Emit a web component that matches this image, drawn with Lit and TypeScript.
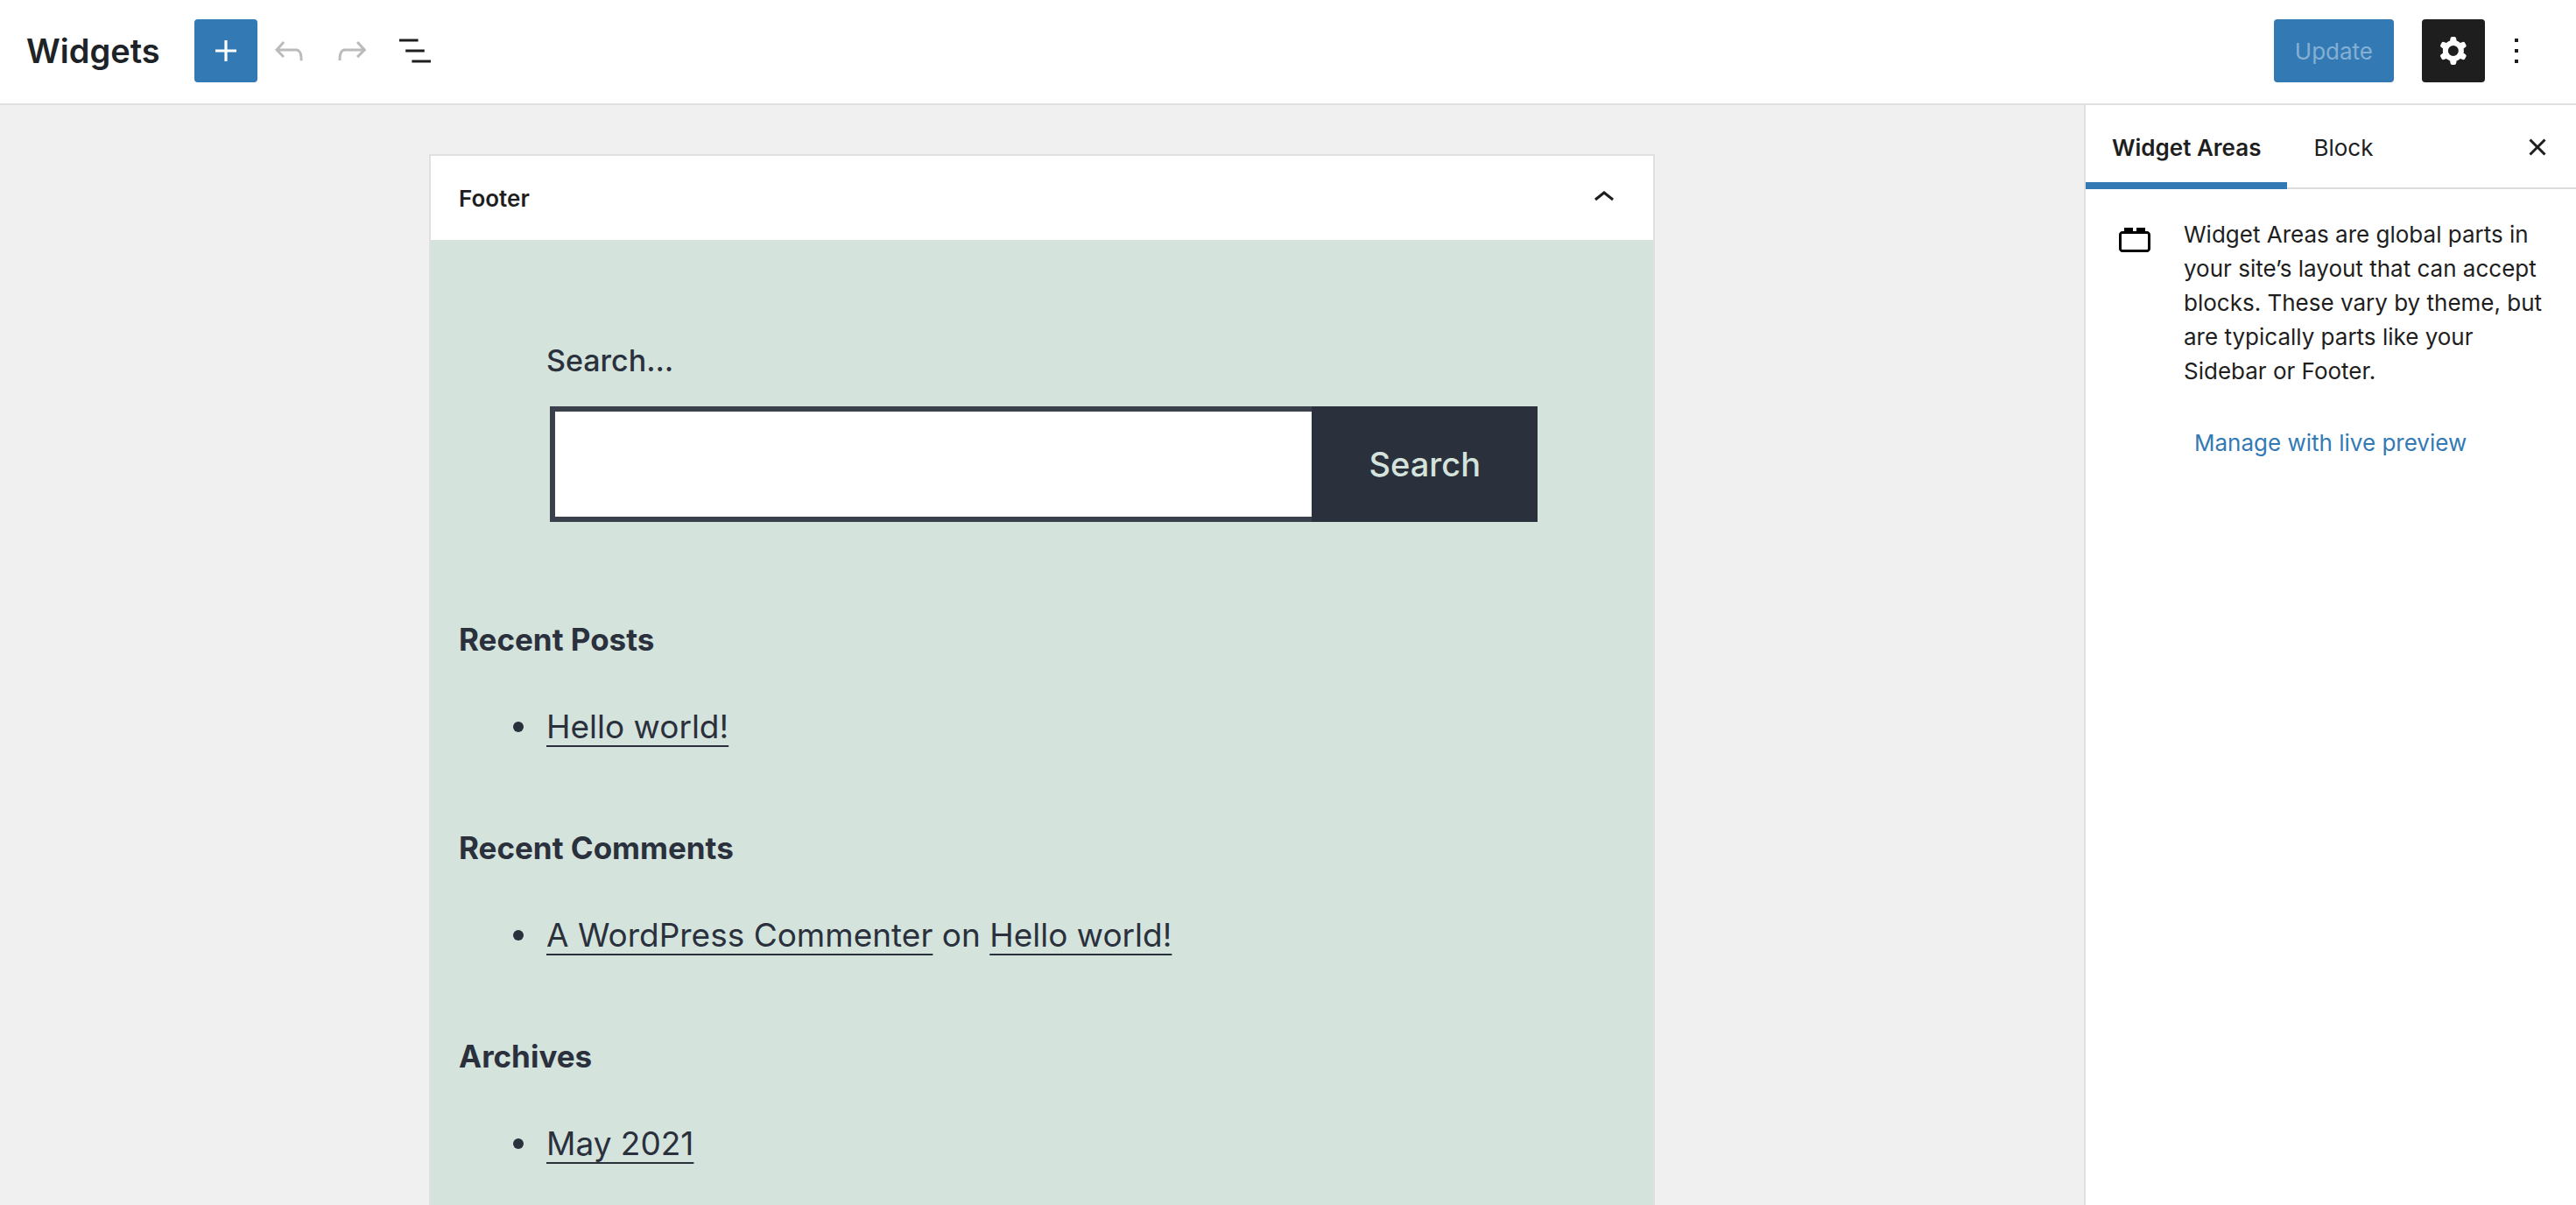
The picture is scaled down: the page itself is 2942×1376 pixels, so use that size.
import { LitElement, html, css, svg, nothing } from "lit";
import { customElement, property, state } from "lit/decorators.js";

const ICONS = {
  plus: "M18 11.2h-5.2V6h-1.6v5.2H6v1.6h5.2V18h1.6v-5.2H18z",
  undo: "M18.3 11.7c-.6-.6-1.4-.9-2.3-.9H6.7l2.9-3.3-1.1-1-4.5 5L8.5 16l1-1-2.7-2.7H16c.5 0 .9.2 1.3.5 1 1 1 3.4 1 4.5v.3h1.5v-.2c0-1.5 0-4.3-1.5-5.7z",
  redo: "M15.6 6.5l-1.1 1 2.9 3.3H8c-.9 0-1.7.3-2.3.9-1.4 1.5-1.4 4.2-1.4 5.6v.2h1.5v-.3c0-1.1 0-3.5 1-4.5.3-.3.7-.5 1.3-.5h9.2L14.5 15l1.1 1.1 4.6-4.6-4.6-5z",
  list: "M13.8 5.2H3v1.5h10.8V5.2zm-3.6 12v1.5H21v-1.5H10.2zm7.2-6H6.6v1.5h10.8v-1.5z",
  cog: "M10.289 4.836A1 1 0 0111.275 4h1.306a1 1 0 01.987.836l.244 1.466c.787.26 1.503.679 2.108 1.218l1.393-.522a1 1 0 011.216.437l.653 1.13a1 1 0 01-.23 1.273l-1.148.944a6.025 6.025 0 010 2.435l1.149.946a1 1 0 01.23 1.272l-.653 1.13a1 1 0 01-1.216.437l-1.394-.522c-.605.54-1.32.958-2.108 1.218l-.244 1.466a1 1 0 01-.987.836h-1.306a1 1 0 01-.986-.836l-.244-1.466a5.995 5.995 0 01-2.108-1.218l-1.394.522a1 1 0 01-1.217-.436l-.653-1.131a1 1 0 01.23-1.272l1.149-.946a6.026 6.026 0 010-2.435l-1.148-.944a1 1 0 01-.23-1.272l.653-1.131a1 1 0 011.217-.437l1.393.522a5.994 5.994 0 012.108-1.218l.244-1.466zM14.929 12a3 3 0 11-6 0 3 3 0 016 0z",
  more: "M13 19h-2v-2h2v2zm0-6h-2v-2h2v2zm0-6h-2V5h2v2z",
  chevron: "M6.5 12.4L12 8l5.5 4.4-.9 1.2L12 10l-4.5 3.6-1-1.2z",
  close: "M12 13.06l3.712 3.713 1.061-1.06L13.061 12l3.712-3.712-1.06-1.06L12 10.938 8.288 7.227l-1.061 1.06L10.939 12l-3.712 3.712 1.06 1.061L12 13.061z",
  block: "M19 8h-1V6h-5v2h-2V6H6v2H5c-1.1 0-2 .9-2 2v8c0 1.1.9 2 2 2h14c1.1 0 2-.9 2-2v-8c0-1.1-.9-2-2-2zm.5 10c0 .3-.2.5-.5.5H5c-.3 0-.5-.2-.5-.5v-8c0-.3.2-.5.5-.5h14c.3 0 .5.2.5.5v8z",
};

type IconName = keyof typeof ICONS;

const icon = (name: IconName) => html`
  <svg class="icon" viewBox="0 0 24 24" aria-hidden="true">
    ${svg`<path fill-rule="evenodd" clip-rule="evenodd" d=${ICONS[name]}></path>`}
  </svg>
`;

const shared = css`
  *,
  *::before {
    box-sizing: border-box;
  }
  h1,
  h2,
  h3,
  p,
  ul {
    margin: 0;
    padding: 0;
    font-size: inherit;
  }
  button,
  input {
    margin: 0;
    padding: 0;
    border: 0;
    border-radius: 0;
    background: none;
    color: inherit;
    font: inherit;
  }
  .icon {
    display: block;
    flex: none;
    width: 48px;
    height: 48px;
    fill: currentColor;
  }
`;

@customElement("editor-header")
class EditorHeader extends LitElement {
  static styles = [
    shared,
    css`
      :host {
        display: flex;
        align-items: center;
        justify-content: space-between;
        padding: 22px 32px 24px 30px;
        border-bottom: 2px solid #e0e0e0;
        background: #fff;
      }
      .group {
        display: flex;
        align-items: center;
      }
      .title {
        margin-right: 39px;
        color: #1d2327;
        font-size: 38px;
        font-weight: 600;
        line-height: 48px;
      }
      .tool {
        display: flex;
        align-items: center;
        justify-content: center;
        width: 72px;
        height: 72px;
        border-radius: 4px;
      }
      .tool:disabled {
        color: #bbb;
      }
      .add {
        background: #337ab5;
        color: #fff;
      }
      .update {
        height: 72px;
        margin-right: 32px;
        padding: 0 24px;
        border-radius: 4px;
        background: #337ab5;
        color: #85afd3;
      }
      .active {
        background: #1e1e1e;
        color: #fff;
      }
    `,
  ];

  render() {
    return html`
      <div class="group">
        <h1 class="title">Widgets</h1>
        <button class="tool add" aria-label="Add block">${icon("plus")}</button>
        <button class="tool" aria-label="Undo" disabled>${icon("undo")}</button>
        <button class="tool" aria-label="Redo" disabled>${icon("redo")}</button>
        <button class="tool" aria-label="List View">${icon("list")}</button>
      </div>
      <div class="group">
        <button class="update" disabled>Update</button>
        <button class="tool active" aria-label="Settings" aria-pressed="true">${icon("cog")}</button>
        <button class="tool" aria-label="Options">${icon("more")}</button>
      </div>
    `;
  }
}

interface Entry {
  before: string;
  joiner?: string;
  after?: string;
}

interface WidgetList {
  title: string;
  items: Entry[];
}

@customElement("widget-area")
class WidgetArea extends LitElement {
  @property() name = "";
  @property({ attribute: false }) lists: WidgetList[] = [];
  @state() private open = true;

  static styles = [
    shared,
    css`
      :host {
        display: flex;
        flex-direction: column;
        border: 2px solid #e0e0e0;
        border-bottom: 0;
        background: #fff;
      }
      .toggle {
        display: flex;
        align-items: center;
        justify-content: space-between;
        width: 100%;
        height: 96px;
        padding: 0 32px;
        font-weight: 600;
      }
      .closed .icon {
        transform: rotate(180deg);
      }
      .body {
        flex: 1;
        padding: 112px 32px 0;
        background: #d4e3dc;
        color: #2a303c;
        font-size: 37px;
        line-height: 68px;
      }
      .search {
        margin: 0 100px 112px;
      }
      .label {
        display: block;
        margin-bottom: 26px;
        font-size: 34px;
        font-weight: 500;
        line-height: 52px;
      }
      .field {
        display: flex;
        height: 132px;
        margin: 0 0 0 4px;
      }
      .input {
        flex: 1;
        min-width: 0;
        padding: 0 24px;
        border: 6px solid #3a404c;
        border-right: 0;
        background: #fff;
      }
      .submit {
        padding: 0 65px;
        background: #2a303c;
        color: #d4e3dc;
        font-size: 38px;
        font-weight: 500;
      }
      .list {
        margin-bottom: 82px;
      }
      .heading {
        margin-bottom: 44px;
        font-size: 35px;
        font-weight: 700;
        line-height: 44px;
      }
      .items {
        padding-left: 62px;
        list-style: none;
      }
      .item {
        display: flex;
        align-items: center;
        gap: 26px;
      }
      .item::before {
        content: "";
        width: 12px;
        height: 12px;
        border-radius: 50%;
        background: #2a303c;
      }
      .link {
        color: inherit;
        text-decoration: underline 2px;
        text-underline-offset: 8px;
        text-decoration-skip-ink: none;
      }
    `,
  ];

  private toggle() {
    this.open = !this.open;
  }

  render() {
    return html`
      <h2 class=${this.open ? "head" : "head closed"}>
        <button class="toggle" aria-expanded=${this.open} @click=${this.toggle}>
          ${this.name} ${icon("chevron")}
        </button>
      </h2>
      ${this.open ? this.renderBody() : nothing}
    `;
  }

  private renderBody() {
    return html`
      <div class="body">
        <form class="search" @submit=${(e: Event) => e.preventDefault()}>
          <label class="label" for="search">Search…</label>
          <div class="field">
            <input class="input" id="search" type="text" />
            <button class="submit" type="submit">Search</button>
          </div>
        </form>
        ${this.lists.map(
          (list) => html`
            <section class="list">
              <h3 class="heading">${list.title}</h3>
              <ul class="items">
                ${list.items.map(
                  (item) => html`<li class="item"><span
                    ><a class="link" href="#">${item.before}</a>${item.after
                      ? html` ${item.joiner} <a class="link" href="#">${item.after}</a>`
                      : nothing}</span
                  ></li>`
                )}
              </ul>
            </section>
          `
        )}
      </div>
    `;
  }
}

@customElement("editor-sidebar")
class EditorSidebar extends LitElement {
  static styles = [
    shared,
    css`
      :host {
        display: block;
        border-left: 2px solid #e0e0e0;
        background: #fff;
      }
      .tabs {
        display: flex;
        align-items: center;
        height: 96px;
        box-shadow: inset 0 -2px #ddd;
      }
      .tab {
        height: 96px;
        padding: 0 30px;
      }
      .selected {
        box-shadow: inset 0 -8px #337ab5;
        font-weight: 600;
      }
      .close {
        margin: 0 20px 0 auto;
      }
      .panel {
        display: flex;
        gap: 32px;
        padding: 32px;
        line-height: 39px;
      }
      .glyph {
        color: #000;
      }
      .manage {
        display: flex;
        align-items: center;
        width: max-content;
        height: 72px;
        margin-top: 26px;
        padding: 0 12px;
        color: #337ab5;
        text-decoration: none;
      }
    `,
  ];

  render() {
    return html`
      <div class="tabs" role="tablist">
        <button class="tab selected" role="tab" aria-selected="true">Widget Areas</button>
        <button class="tab" role="tab" aria-selected="false">Block</button>
        <button class="close" aria-label="Close settings">${icon("close")}</button>
      </div>
      <div class="panel">
        <span class="glyph">${icon("block")}</span>
        <div class="text">
          <p>
            Widget Areas are global parts in your site’s layout that can accept blocks. These vary by
            theme, but are typically parts like your Sidebar or Footer.
          </p>
          <a class="manage" href="#">Manage with live preview</a>
        </div>
      </div>
    `;
  }
}

@customElement("app-root")
class AppRoot extends LitElement {
  private lists: WidgetList[] = [
    { title: "Recent Posts", items: [{ before: "Hello world!" }] },
    {
      title: "Recent Comments",
      items: [{ before: "A WordPress Commenter", joiner: "on", after: "Hello world!" }],
    },
    { title: "Archives", items: [{ before: "May 2021" }] },
  ];

  static styles = [
    shared,
    css`
      :host {
        display: flex;
        flex-direction: column;
        min-height: 100vh;
        background: #f0f0f0;
        color: #1e1e1e;
        font-family: Inter, "Liberation Sans", sans-serif;
        font-size: 26px;
        line-height: 39px;
      }
      .workspace {
        display: grid;
        flex: 1;
        grid-template-columns: minmax(0, 1fr) 562px;
      }
      .canvas {
        display: flex;
        justify-content: center;
        padding: 56px 32px 0;
      }
      .area {
        flex: 0 1 1400px;
      }
    `,
  ];

  render() {
    return html`
      <editor-header></editor-header>
      <div class="workspace">
        <main class="canvas">
          <widget-area class="area" name="Footer" .lists=${this.lists}></widget-area>
        </main>
        <editor-sidebar></editor-sidebar>
      </div>
    `;
  }
}
